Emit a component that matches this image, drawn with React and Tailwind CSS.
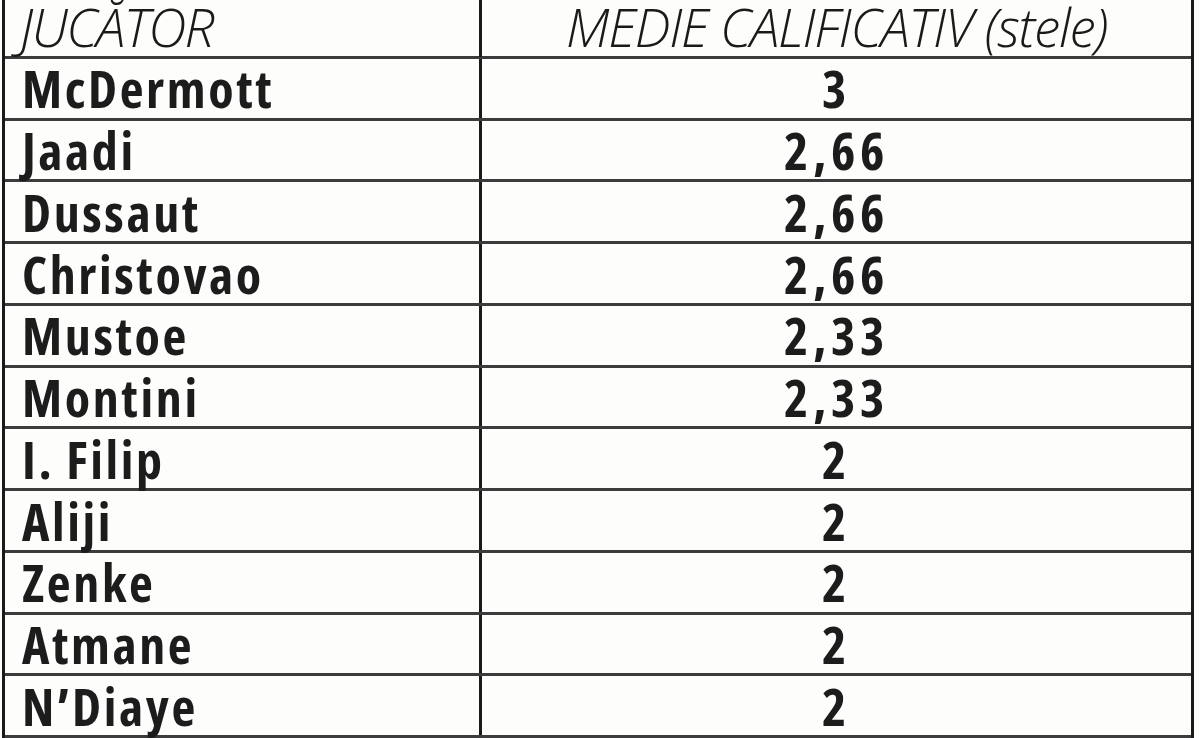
import React from "react";

const rows = [
    { name: "McDermott",  avg: "3" },
    { name: "Jaadi",      avg: "2,66" },
    { name: "Dussaut",    avg: "2,66" },
    { name: "Christovao", avg: "2,66" },
    { name: "Mustoe",     avg: "2,33" },
    { name: "Montini",    avg: "2,33" },
    { name: "I. Filip",   avg: "2" },
    { name: "Aliji",      avg: "2" },
    { name: "Zenke",      avg: "2" },
    { name: "Atmane",     avg: "2" },
    { name: "N’Diaye",    avg: "2" }
];

const font = { fontFamily: '"Open Sans", "DejaVu Sans Condensed", sans-serif' };

function App() {
    return (
        <div className="w-[1200px] h-[738px] overflow-hidden bg-[#fdfdfb]" style={font}>
            <div className="ml-[2px] w-[1192px] h-[738px] flex flex-col border-l-[3px] border-r-[3px] border-[#1a1a1a]">
                <div className="grid grid-cols-[477px_1fr] h-[59px] shrink-0 border-b-[3px] border-[#3c3c3c]">
                    <div className="border-r-[3px] border-[#1a1a1a] pl-[15px] flex items-end pb-[4px] text-[53px] leading-none italic font-light tracking-[-0.03em] text-[#1a1a1a]">
                        JUCĂTOR
                    </div>
                    <div className="flex items-end justify-center pb-[4px] text-[53px] leading-none italic font-light tracking-[-0.025em] text-[#1a1a1a]">
                        MEDIE CALIFICATIV (stele)
                    </div>
                </div>

                {rows.map(row => (
                    <div key={row.name} className="grid grid-cols-[477px_1fr] flex-1 border-b-[3px] border-[#3c3c3c]">
                        <div className="border-r-[3px] border-[#1a1a1a] pl-[17px] flex items-center text-[52px] leading-none font-bold font-stretch-condensed tracking-[0.05em] text-[#1c1c1c]">
                            {row.name}
                        </div>
                        <div className="flex items-center justify-center text-[52px] leading-none font-bold font-stretch-condensed tracking-[0.09em] text-[#1c1c1c]">
                            {row.avg}
                        </div>
                    </div>
                ))}
            </div>
        </div>
    );
}

export default App;
